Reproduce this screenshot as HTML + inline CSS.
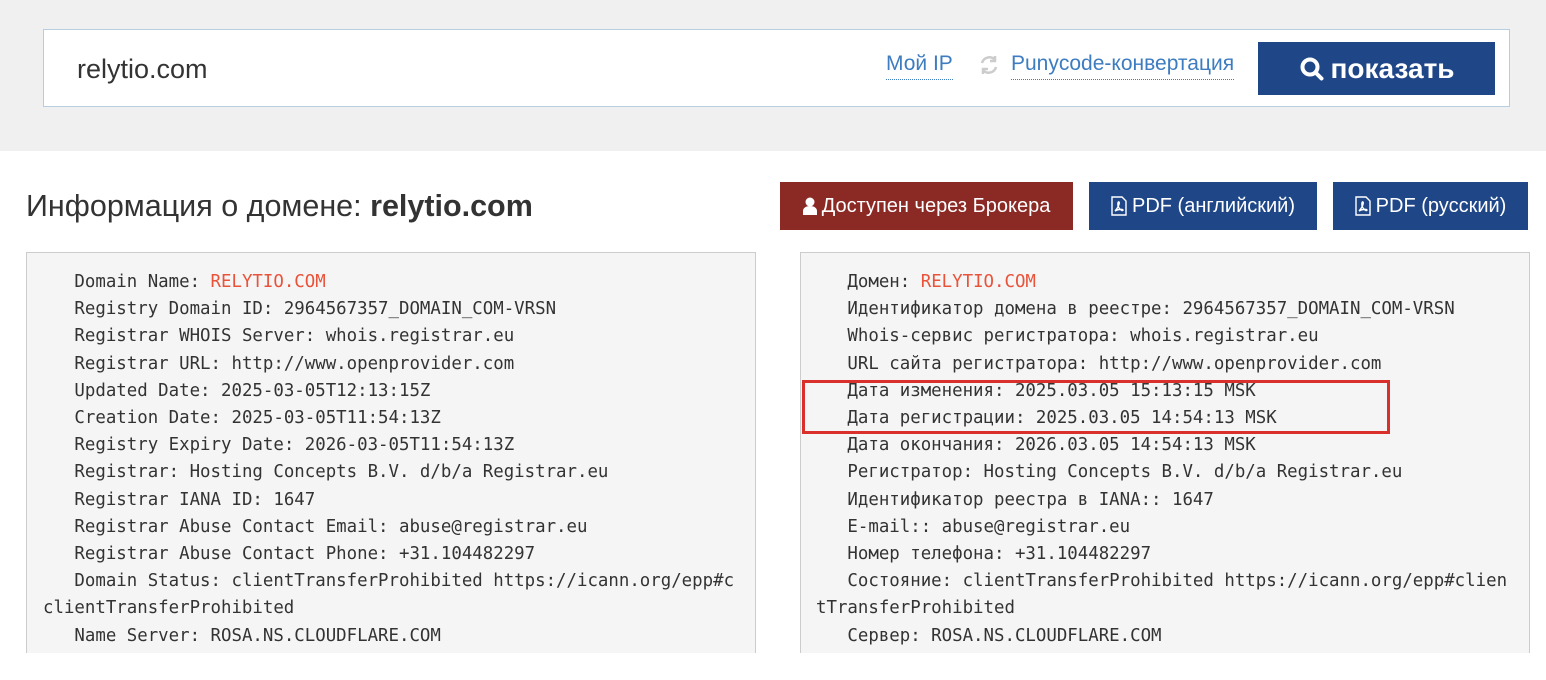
<!DOCTYPE html>
<html><head><meta charset="utf-8"><style>
body{margin:0;width:1546px;height:680px;overflow:hidden;background:#fff;font-family:"Liberation Sans",Arial,sans-serif;position:relative}
.top{position:absolute;left:0;top:0;width:1546px;height:151px;background:#f0f0f0}
.inp{position:absolute;left:43px;top:29px;width:1465px;height:76px;background:#fff;border:1px solid #b9cde0}
.inp .v{position:absolute;left:33px;top:24px;font-size:27px;color:#333}
.lnk{position:absolute;top:22px;font-size:21px;color:#3d7cc0;border-bottom:1px dotted #3d7cc0;padding-bottom:3px}
.sbtn{position:absolute;left:1214px;top:12px;width:237px;height:53px;background:#1f4788;color:#fff;font-weight:bold;font-size:28px;display:flex;align-items:center;justify-content:center;gap:6px}
h1{position:absolute;left:26px;top:189px;margin:0;font-weight:normal;font-size:30.5px;color:#333}
.btn{position:absolute;top:182px;height:48px;color:#fff;font-size:20px;display:flex;align-items:center;justify-content:center;gap:5px}
pre{position:absolute;top:252px;margin:0;width:697px;height:384px;padding:16px 15px 0 16px;background:#f5f5f5;border:1px solid #ccc;border-bottom:none;font-family:"DejaVu Sans Mono","Liberation Mono",monospace;font-size:17.4px;line-height:27.2px;color:#333;white-space:pre-wrap;word-break:break-all;overflow:hidden}
.r{color:#e8533a}
.box{position:absolute;left:802px;top:380px;width:582px;height:48px;border:3px solid #d9302c}
</style></head><body>
<div class="top"></div>
<div class="inp"><span class="v">relytio.com</span>
<span class="lnk" style="left:842px">Мой IP</span>
<svg style="position:absolute;left:934px;top:24px" width="22" height="22" viewBox="0 0 22 22" fill="none" stroke="#ccc" stroke-width="2.5"><path d="M4 9a7.5 7.5 0 0 1 13-3M18 13a7.5 7.5 0 0 1-13 3"/><path d="M17 2v5h-5M5 20v-5h5"/></svg>
<span class="lnk" style="left:967px">Punycode-конвертация</span>
<div class="sbtn"><svg width="26" height="26" viewBox="0 0 26 26" fill="none" stroke="#fff" stroke-width="4"><circle cx="11" cy="11" r="7.5"/><path d="M16.5 16.5l6 6" stroke-linecap="round"/></svg>показать</div>
</div>
<h1>Информация о домене: <b>relytio.com</b></h1>
<div class="btn" style="left:780px;width:293px;background:#8b2a25"><svg width="14" height="18" viewBox="0 0 14 18" fill="#fff"><circle cx="7" cy="5" r="4.5"/><path d="M0 18v-4c0-3 3-5 7-5s7 2 7 5v4z"/></svg>Доступен через Брокера</div>
<div class="btn" style="left:1089px;width:228px;background:#1f4788"><svg width="16" height="20" viewBox="0 0 16 20" fill="none" stroke="#fff" stroke-width="1.4"><path d="M1 1h10l4 4v14H1z"/><path d="M4 15c3-3 5-8 4-9s-2 3 0 6 4 3 4 2-5-1-8 1z"/></svg>PDF (английский)</div>
<div class="btn" style="left:1333px;width:195px;background:#1f4788"><svg width="16" height="20" viewBox="0 0 16 20" fill="none" stroke="#fff" stroke-width="1.4"><path d="M1 1h10l4 4v14H1z"/><path d="M4 15c3-3 5-8 4-9s-2 3 0 6 4 3 4 2-5-1-8 1z"/></svg>PDF (русский)</div>
<pre style="left:26px">   Domain Name: <span class="r">RELYTIO.COM</span>
   Registry Domain ID: 2964567357_DOMAIN_COM-VRSN
   Registrar WHOIS Server: whois.registrar.eu
   Registrar URL: http://www.openprovider.com
   Updated Date: 2025-03-05T12:13:15Z
   Creation Date: 2025-03-05T11:54:13Z
   Registry Expiry Date: 2026-03-05T11:54:13Z
   Registrar: Hosting Concepts B.V. d/b/a Registrar.eu
   Registrar IANA ID: 1647
   Registrar Abuse Contact Email: abuse@registrar.eu
   Registrar Abuse Contact Phone: +31.104482297
   Domain Status: clientTransferProhibited https://icann.org/epp#c
clientTransferProhibited
   Name Server: ROSA.NS.CLOUDFLARE.COM</pre>
<pre style="left:800px;padding-left:15px;width:698px">   Домен: <span class="r">RELYTIO.COM</span>
   Идентификатор домена в реестре: 2964567357_DOMAIN_COM-VRSN
   Whois-сервис регистратора: whois.registrar.eu
   URL сайта регистратора: http://www.openprovider.com
   Дата изменения: 2025.03.05 15:13:15 MSK
   Дата регистрации: 2025.03.05 14:54:13 MSK
   Дата окончания: 2026.03.05 14:54:13 MSK
   Регистратор: Hosting Concepts B.V. d/b/a Registrar.eu
   Идентификатор реестра в IANA:: 1647
   E-mail:: abuse@registrar.eu
   Номер телефона: +31.104482297
   Состояние: clientTransferProhibited https://icann.org/epp#clien
tTransferProhibited
   Сервер: ROSA.NS.CLOUDFLARE.COM</pre>
<div class="box"></div>
</body></html>
